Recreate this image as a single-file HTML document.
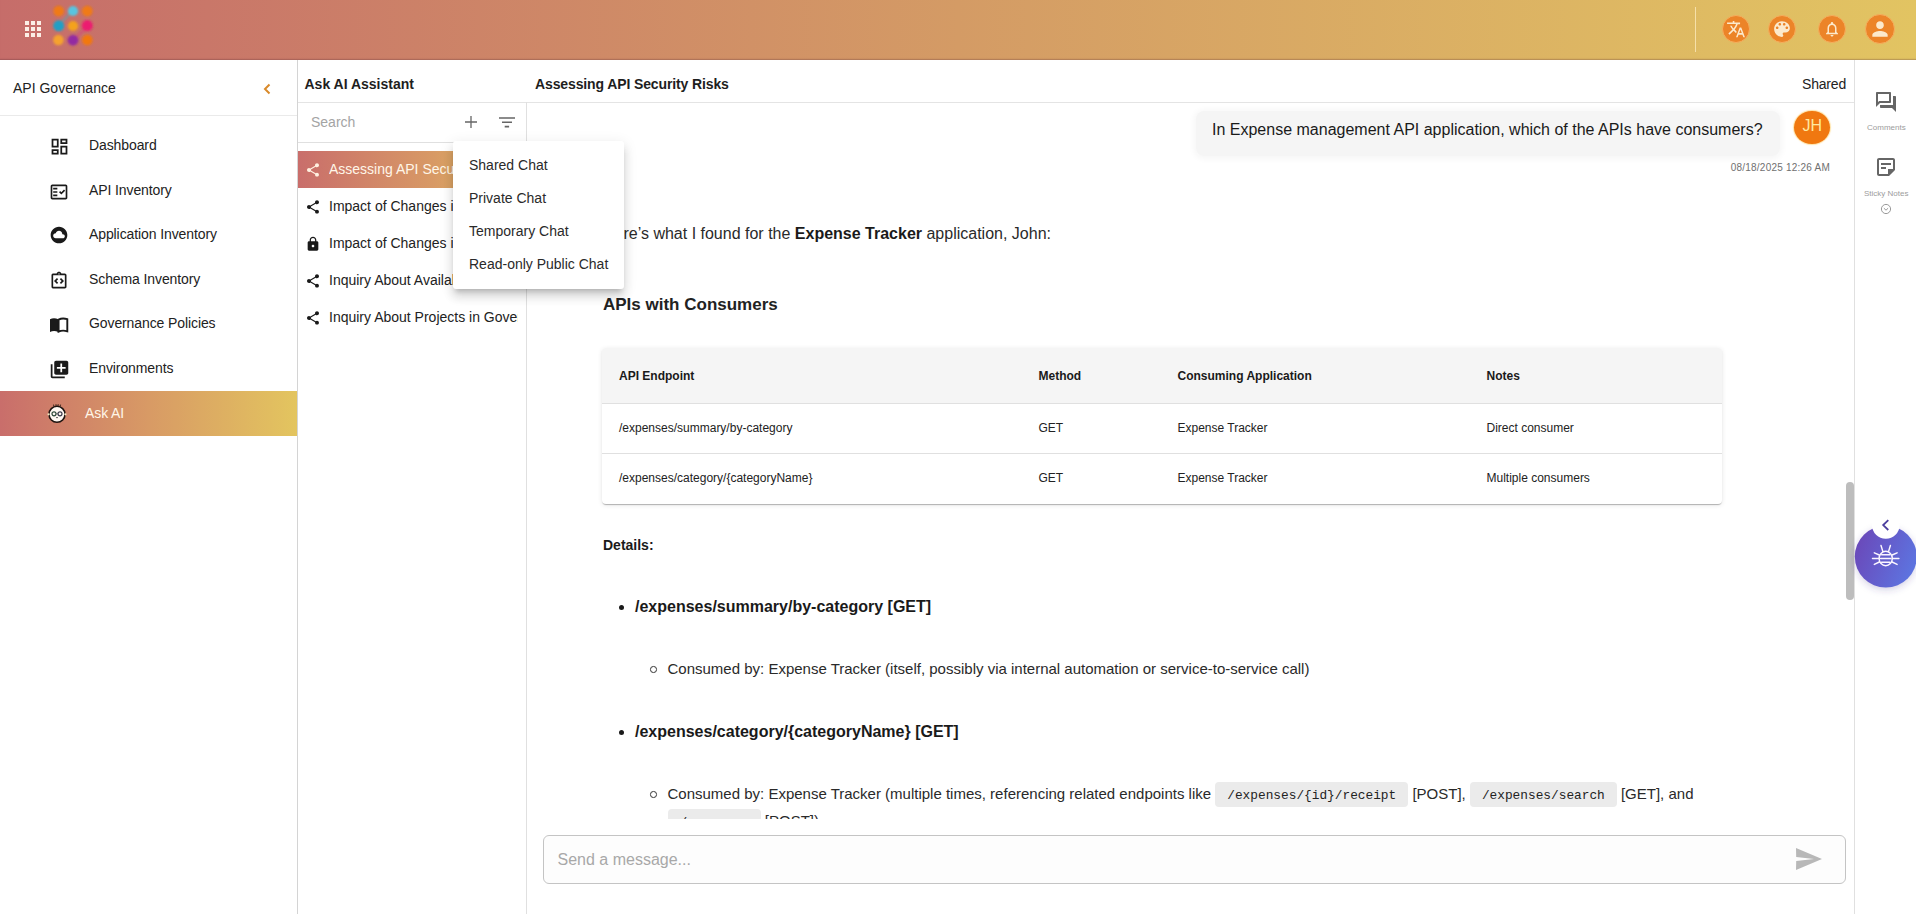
<!DOCTYPE html>
<html><head><meta charset="utf-8">
<style>
*{box-sizing:border-box;margin:0;padding:0}
html,body{width:1916px;height:914px;overflow:hidden;background:#fff;font-family:"Liberation Sans",sans-serif;color:#222}
.abs{position:absolute}
.t{position:absolute;white-space:nowrap;line-height:1;transform:translateY(-1px)}
.t0{transform:none}
#hdr{position:absolute;left:0;top:0;width:1916px;height:60px;background:linear-gradient(90deg,#C66D6A 0%,#D49B65 50%,#E2C462 100%);box-shadow:inset 0 -1px 0 rgba(80,40,50,.2),inset 0 -2px 1px rgba(80,40,50,.06)}
.hic{position:absolute;top:15px;width:28px;height:28px;border-radius:50%;background:#EC8428;border:1px solid #F6AE5E}
.hic svg{position:absolute;left:50%;top:50%;transform:translate(-50%,-50%)}
.vl{position:absolute;width:1px;background:#E0E0E0}
.hl{position:absolute;height:1px;background:#E0E0E0}
.nav{position:absolute;left:0;width:297px;height:45px}
.nav svg{position:absolute}
.nav .lb{position:absolute;left:89px;top:14px;font-size:14px;line-height:16px;color:#222;white-space:nowrap;letter-spacing:-0.1px}
.chat{position:absolute;left:298px;width:228px;height:37px;overflow:hidden}
.chat svg{position:absolute;left:7px;top:11px}
.chat .lb{position:absolute;left:31px;top:10px;width:189px;overflow:hidden;font-size:14px;line-height:16px;color:#222;white-space:nowrap}
.menu{position:absolute;left:453px;top:141px;width:171px;height:147.5px;background:#fff;border-radius:3px;box-shadow:0 5px 5px -3px rgba(0,0,0,.2),0 8px 10px 1px rgba(0,0,0,.1),0 3px 14px 2px rgba(0,0,0,.07);z-index:10}
.menu .it{position:absolute;left:16px;font-size:14px;line-height:16px;color:#2a2a2a;white-space:nowrap}
#content{position:absolute;left:527px;top:103px;width:1319px;height:715.5px;overflow:hidden}
#content .t{color:#222}
.tbl{position:absolute;left:75px;top:245px;width:1120px;height:155.5px;border-radius:4px;background:#fff;box-shadow:0 2px 1px -1px rgba(0,0,0,.18),0 1px 1px 0 rgba(0,0,0,.1),0 1px 5px 0 rgba(0,0,0,.1);overflow:hidden}
.tbl .th{position:absolute;left:0;top:0;width:100%;height:56px;background:#F5F5F5;border-bottom:1px solid #E0E0E0}
.tbl .rw{position:absolute;left:0;width:100%;border-bottom:1px solid #E0E0E0}
.tbl .c{position:absolute;font-size:12px;line-height:1;white-space:nowrap;color:#222;transform:translateY(-1px)}
.tbl .th .c{font-weight:bold;color:#1a1a1a}
code{font-family:"Liberation Mono",monospace;font-size:12.8px;background:#EBEBEB;border-radius:4px;padding:6px 12px 4px 12px;color:#222;line-height:1}
.bul{position:absolute;width:5.4px;height:5.4px;border-radius:50%;background:#1a1a1a}
.cir{position:absolute;width:6.6px;height:6.6px;border-radius:50%;border:1.1px solid #333}
</style></head>
<body>
<!-- HEADER -->
<div id="hdr">
  <svg class="abs" style="left:25px;top:21px" width="16" height="16" viewBox="0 0 16 16">
    <g fill="#FCEFE6">
      <rect x="0" y="0" width="4" height="4"/><rect x="6" y="0" width="4" height="4"/><rect x="12" y="0" width="4" height="4"/>
      <rect x="0" y="6" width="4" height="4"/><rect x="6" y="6" width="4" height="4"/><rect x="12" y="6" width="4" height="4"/>
      <rect x="0" y="12" width="4" height="4"/><rect x="6" y="12" width="4" height="4"/><rect x="12" y="12" width="4" height="4"/>
    </g>
  </svg>
  <svg class="abs" style="left:50px;top:3px" width="48" height="46" viewBox="0 0 48 46">
    <defs><filter id="lb" x="-20%" y="-20%" width="140%" height="140%"><feGaussianBlur stdDeviation="1"/></filter></defs>
    <g filter="url(#lb)">
    <path d="M11 20 L20 10.5" stroke="#3AB0C8" stroke-width="2.2" opacity=".45"/>
    <path d="M34 27 L26 34.5" stroke="#D8308A" stroke-width="2.2" opacity=".45"/>
    <circle cx="8.7" cy="8" r="5.3" fill="#F07A12"/>
    <circle cx="23" cy="8" r="5.1" fill="#58C4E0"/>
    <circle cx="37.3" cy="8" r="5.3" fill="#F07A12"/>
    <circle cx="8.7" cy="22.8" r="5.5" fill="#229FC4"/>
    <circle cx="23" cy="23" r="5.1" fill="#F4A21E"/>
    <circle cx="37.3" cy="22.6" r="5.5" fill="#EC1C70"/>
    <circle cx="8.4" cy="37" r="5.3" fill="#F5A22E"/>
    <circle cx="23" cy="37.2" r="5.4" fill="#932CA2"/>
    <circle cx="37.3" cy="37" r="5.3" fill="#F27810"/>
    </g>
  </svg>
  <div class="abs" style="left:1695px;top:7px;width:1px;height:45px;background:rgba(255,240,200,.7)"></div>
  <div class="hic" style="left:1722px"><svg width="19.5" height="19.5" viewBox="0 0 24 24"><path fill="#FCE9CC" d="M12.87 15.07l-2.54-2.51.03-.03c1.74-1.94 2.98-4.17 3.71-6.53H17V4h-7V2H8v2H1v1.99h11.17C11.5 7.92 10.44 9.75 9 11.35 8.07 10.32 7.3 9.19 6.69 8h-2c.73 1.63 1.73 3.17 2.98 4.56l-5.09 5.02L4 19l5-5 3.11 3.11.76-2.04zM18.5 10h-2L12 22h2l1.12-3h4.75L21 22h2l-4.5-12zm-2.62 7l1.62-4.33L19.12 17h-3.24z"/></svg></div>
  <div class="hic" style="left:1768px"><svg width="21" height="21" viewBox="0 0 24 24"><path fill="#FCE9CC" d="M12 3c-4.97 0-9 4.03-9 9s4.03 9 9 9c.83 0 1.5-.67 1.5-1.5 0-.39-.15-.74-.39-1.01-.23-.26-.38-.61-.38-.99 0-.83.67-1.5 1.5-1.5H16c2.76 0 5-2.24 5-5 0-4.42-4.03-8-9-8zm-5.5 9c-.83 0-1.5-.67-1.5-1.5S5.67 9 6.5 9 8 9.67 8 10.5 7.33 12 6.5 12zm3-4C8.67 8 8 7.33 8 6.5S8.67 5 9.5 5s1.5.67 1.5 1.5S10.33 8 9.5 8zm5 0c-.83 0-1.5-.67-1.5-1.5S13.67 5 14.5 5s1.5.67 1.5 1.5S15.33 8 14.5 8zm3 4c-.83 0-1.5-.67-1.5-1.5S16.67 9 17.5 9s1.5.67 1.5 1.5-.67 1.5-1.5 1.5z"/></svg></div>
  <div class="hic" style="left:1818px"><svg width="18" height="18" viewBox="0 0 24 24"><path fill="#FCE9CC" d="M12 22c1.1 0 2-.9 2-2h-4c0 1.1.89 2 2 2zm6-6v-5c0-3.07-1.64-5.64-4.5-6.32V4c0-.83-.67-1.5-1.5-1.5s-1.5.67-1.5 1.5v.68C7.63 5.36 6 7.92 6 11v5l-2 2v1h16v-1l-2-2zm-2 1H8v-6c0-2.48 1.51-4.5 4-4.5s4 2.02 4 4.5v6z"/></svg></div>
  <div class="hic" style="left:1865px;top:14px;width:30px;height:30px"><svg width="23" height="23" viewBox="0 0 24 24"><path fill="#FCE9CC" d="M12 12c2.21 0 4-1.79 4-4s-1.79-4-4-4-4 1.79-4 4 1.79 4 4 4zm0 2c-2.67 0-8 1.34-8 4v2h16v-2c0-2.66-5.33-4-8-4z"/></svg></div>
</div>

<!-- LEFT SIDEBAR -->
<div class="vl" style="left:297px;top:60px;height:854px;background:#D4D4D4"></div>
<div class="t t0" style="left:13px;top:81px;font-size:14px;color:#222">API Governance</div>
<svg class="abs" style="left:262px;top:83px" width="10" height="12" viewBox="0 0 10 12"><path d="M7.5 1.5 L3 6 L7.5 10.5" stroke="#D98A2A" stroke-width="2" fill="none"/></svg>
<div class="hl" style="left:0;top:115px;width:297px;background:#EAEAEA"></div>

<div class="nav" style="top:123px"><svg style="left:48.6px;top:13.1px" width="21" height="21" viewBox="0 0 24 24"><path fill="#1a1a1a" d="M19 5v2h-4V5h4M9 5v6H5V5h4m10 8v6h-4v-6h4M9 17v2H5v-2h4M21 3h-8v6h8V3zM11 3H3v10h8V3zm10 8h-8v10h8V11zm-10 4H3v6h8v-6z"/></svg><div class="lb">Dashboard</div></div>
<div class="nav" style="top:168px"><svg style="left:49px;top:13.5px" width="20" height="20" viewBox="0 0 24 24"><path fill="#1a1a1a" d="M20 3H4c-1.1 0-2 .9-2 2v14c0 1.1.9 2 2 2h16c1.1 0 2-.9 2-2V5c0-1.1-.9-2-2-2zm0 16H4V5h16v14z"/><path fill="#1a1a1a" d="M19.41 10.42l-1.42-1.42-3.17 3.17-1.41-1.42L12 12.16 14.82 15zM5 7h5v2H5zm0 4h5v2H5zm0 4h5v2H5z"/></svg><div class="lb">API Inventory</div></div>
<div class="nav" style="top:212px"><svg style="left:49.2px;top:13.2px" width="20" height="20" viewBox="0 0 24 24"><path fill="#1a1a1a" d="M12 2C6.48 2 2 6.48 2 12s4.48 10 10 10 10-4.48 10-10S17.52 2 12 2zm4.5 14H8c-1.66 0-3-1.34-3-3s1.34-3 3-3l.14.01C8.58 8.28 10.13 7 12 7c2.21 0 4 1.79 4 4h.5c1.38 0 2.5 1.12 2.5 2.5S17.88 16 16.5 16z"/></svg><div class="lb">Application Inventory</div></div>
<div class="nav" style="top:257px"><svg style="left:49.2px;top:13.5px" width="20" height="20" viewBox="0 0 24 24"><path fill="#1a1a1a" d="M11 14.17 8.83 12 11 9.83 9.59 8.41 6 12l3.59 3.59zm3.41 1.42L18 12l-3.59-3.59L13 9.83 15.17 12 13 14.17z"/><path fill="#1a1a1a" d="M19 3h-4.18C14.4 1.84 13.3 1 12 1s-2.4.84-2.82 2H5c-.14 0-.27.01-.4.04-.39.08-.74.28-1.01.55-.18.18-.33.4-.43.64-.1.23-.16.49-.16.77v14c0 .27.06.54.16.78s.25.45.43.64c.27.27.62.47 1.01.55.13.02.26.03.4.03h14c1.1 0 2-.9 2-2V5c0-1.1-.9-2-2-2zm-7-.25c.41 0 .75.34.75.75s-.34.75-.75.75-.75-.34-.75-.75.34-.75.75-.75zM19 19H5V5h14v14z"/></svg><div class="lb">Schema Inventory</div></div>
<div class="nav" style="top:301px"><svg style="left:49px;top:16px" width="20" height="16" viewBox="0 0 20 16"><path fill="#1a1a1a" d="M1 2.2 C3.5 0.8 6.5 0.8 9.3 2.2 L9.3 15 C6.5 13.8 3.5 13.8 1 15 Z"/><path fill="none" stroke="#1a1a1a" stroke-width="1.9" d="M9.6 2.6 C12.2 1.3 15.5 1.3 18.3 2.2 L18.3 14.3 C15.5 13.4 12.2 13.4 9.6 14.6 Z"/></svg><div class="lb">Governance Policies</div></div>
<div class="nav" style="top:346px"><svg style="left:48.6px;top:12.9px" width="21" height="21" viewBox="0 0 24 24"><path fill="#1a1a1a" d="M4 6H2v14c0 1.1.9 2 2 2h14v-2H4V6zm16-4H8c-1.1 0-2 .9-2 2v12c0 1.1.9 2 2 2h12c1.1 0 2-.9 2-2V4c0-1.1-.9-2-2-2zm-1 9h-4v4h-2v-4H9V9h4V5h2v4h4v2z"/></svg><div class="lb">Environments</div></div>
<div class="nav" style="top:391px;background:linear-gradient(90deg,#C96E6B 0%,#D89A65 50%,#E3C55F 100%)"><svg style="left:46px;top:11px" width="22" height="22" viewBox="0 0 22 22"><g stroke="#2a1a10" stroke-width="0.9"><path d="M8 4.5 7.5 2.6M10 4 10 2.2M12 4 12.2 2.2M14 4.5 14.6 2.6"/></g><circle cx="11" cy="12.3" r="8" fill="#FFF8F2" stroke="#1e1410" stroke-width="1.6"/><circle cx="8" cy="11.8" r="2" fill="none" stroke="#2f4a3a" stroke-width="1.2"/><circle cx="14" cy="11.8" r="2" fill="none" stroke="#3a3a4a" stroke-width="1.2"/><path d="M10 11.8h2" stroke="#555" stroke-width=".8"/><ellipse cx="11" cy="15.6" rx="1" ry=".6" fill="#444"/><circle cx="2.6" cy="12.3" r="1.1" fill="#F3E8C0"/><circle cx="19.4" cy="12.3" r="1.1" fill="#F3E8C0"/></svg><div class="lb" style="left:85px;color:#FFF6E8">Ask AI</div></div>

<!-- CHAT LIST -->
<div class="t" style="left:304.5px;top:78px;font-size:14px;font-weight:bold;color:#1E1E1E">Ask AI Assistant</div>
<div class="hl" style="left:298px;top:102px;width:1556px;background:#E4E4E4"></div>
<div class="t" style="left:311px;top:116px;font-size:14px;color:#A4A4A4">Search</div>
<svg class="abs" style="left:464px;top:115px" width="14" height="14" viewBox="0 0 14 14"><path d="M7 1v12M1 7h12" stroke="#666" stroke-width="1.3"/></svg>
<svg class="abs" style="left:498px;top:115px" width="18" height="14" viewBox="0 0 18 14"><path d="M1 3h16M4 7.2h10M6.7 11.6h4.4" stroke="#666" stroke-width="1.6"/></svg>
<div class="hl" style="left:298px;top:142px;width:228px;background:#E0E0E0"></div>
<div class="vl" style="left:526px;top:102px;height:812px"></div>

<div class="chat" style="top:151px;background:linear-gradient(90deg,#C96E6B 0%,#D89A65 60%,#E3C55F 100%)"><svg width="16" height="16" viewBox="0 0 24 24"><path fill="#FFF0E0" d="M18 16.08c-.76 0-1.44.3-1.96.77L8.91 12.7c.05-.23.09-.46.09-.7s-.04-.47-.09-.7l7.05-4.11c.54.5 1.25.81 2.04.81 1.66 0 3-1.34 3-3s-1.34-3-3-3-3 1.34-3 3c0 .24.04.47.09.7L8.04 9.81C7.5 9.31 6.79 9 6 9c-1.66 0-3 1.34-3 3s1.34 3 3 3c.79 0 1.5-.31 2.04-.81l7.12 4.16c-.05.21-.08.43-.08.65 0 1.61 1.31 2.92 2.92 2.92s2.92-1.31 2.92-2.92-1.31-2.92-2.92-2.92z"/></svg><div class="lb" style="color:#FFF6E8">Assessing API Security Risks</div></div>
<div class="chat" style="top:188px"><svg width="16" height="16" viewBox="0 0 24 24"><path fill="#1a1a1a" d="M18 16.08c-.76 0-1.44.3-1.96.77L8.91 12.7c.05-.23.09-.46.09-.7s-.04-.47-.09-.7l7.05-4.11c.54.5 1.25.81 2.04.81 1.66 0 3-1.34 3-3s-1.34-3-3-3-3 1.34-3 3c0 .24.04.47.09.7L8.04 9.81C7.5 9.31 6.79 9 6 9c-1.66 0-3 1.34-3 3s1.34 3 3 3c.79 0 1.5-.31 2.04-.81l7.12 4.16c-.05.21-.08.43-.08.65 0 1.61 1.31 2.92 2.92 2.92s2.92-1.31 2.92-2.92-1.31-2.92-2.92-2.92z"/></svg><div class="lb">Impact of Changes in API</div></div>
<div class="chat" style="top:225px"><svg width="16" height="16" viewBox="0 0 24 24"><path fill="#1a1a1a" d="M18 8h-1V6c0-2.76-2.24-5-5-5S7 3.24 7 6v2H6c-1.1 0-2 .9-2 2v10c0 1.1.9 2 2 2h12c1.1 0 2-.9 2-2V10c0-1.1-.9-2-2-2zm-6 9c-1.1 0-2-.9-2-2s.9-2 2-2 2 .9 2 2-.9 2-2 2zm3.1-9H8.9V6c0-1.71 1.39-3.1 3.1-3.1 1.71 0 3.1 1.39 3.1 3.1v2z"/></svg><div class="lb">Impact of Changes in API</div></div>
<div class="chat" style="top:262px"><svg width="16" height="16" viewBox="0 0 24 24"><path fill="#1a1a1a" d="M18 16.08c-.76 0-1.44.3-1.96.77L8.91 12.7c.05-.23.09-.46.09-.7s-.04-.47-.09-.7l7.05-4.11c.54.5 1.25.81 2.04.81 1.66 0 3-1.34 3-3s-1.34-3-3-3-3 1.34-3 3c0 .24.04.47.09.7L8.04 9.81C7.5 9.31 6.79 9 6 9c-1.66 0-3 1.34-3 3s1.34 3 3 3c.79 0 1.5-.31 2.04-.81l7.12 4.16c-.05.21-.08.43-.08.65 0 1.61 1.31 2.92 2.92 2.92s2.92-1.31 2.92-2.92-1.31-2.92-2.92-2.92z"/></svg><div class="lb">Inquiry About Available APIs</div></div>
<div class="chat" style="top:299px"><svg width="16" height="16" viewBox="0 0 24 24"><path fill="#1a1a1a" d="M18 16.08c-.76 0-1.44.3-1.96.77L8.91 12.7c.05-.23.09-.46.09-.7s-.04-.47-.09-.7l7.05-4.11c.54.5 1.25.81 2.04.81 1.66 0 3-1.34 3-3s-1.34-3-3-3-3 1.34-3 3c0 .24.04.47.09.7L8.04 9.81C7.5 9.31 6.79 9 6 9c-1.66 0-3 1.34-3 3s1.34 3 3 3c.79 0 1.5-.31 2.04-.81l7.12 4.16c-.05.21-.08.43-.08.65 0 1.61 1.31 2.92 2.92 2.92s2.92-1.31 2.92-2.92-1.31-2.92-2.92-2.92z"/></svg><div class="lb">Inquiry About Projects in Governance</div></div>

<!-- MAIN HEADER -->
<div class="t" style="left:535px;top:78px;font-size:14px;font-weight:bold;color:#1E1E1E;letter-spacing:-0.12px">Assessing API Security Risks</div>
<div class="t" style="right:70px;top:78px;font-size:14px;color:#222;letter-spacing:-0.2px">Shared</div>
<div class="vl" style="left:1854px;top:60px;height:854px"></div>

<!-- CONTENT -->
<div id="content">
  <!-- user bubble -->
  <div class="abs" style="left:669px;top:8px;width:584px;height:45px;border-radius:8px;background:#F5F5F5;box-shadow:0 1px 6px 2px rgba(0,0,0,.04);filter:blur(0.6px)"></div>
  <div class="t" style="left:685px;top:19.5px;font-size:16px;color:#1a1a1a">In Expense management API application, which of the APIs have consumers?</div>
  <div class="abs" style="left:1267px;top:7.5px;width:36px;height:33.5px;border-radius:50%;background:#F07810;box-shadow:0 0 1px 1px rgba(255,200,80,.5)"></div>
  <div class="t t0" style="left:1275.5px;top:15px;font-size:16px;color:#FFE9A0">JH</div>
  <div class="t t0" style="right:16px;top:59.5px;font-size:10px;letter-spacing:0.22px;color:#707070">08/18/2025 12:26 AM</div>

  <!-- AI response -->
  <div class="t t0" style="left:76px;top:122.5px;font-size:16px;color:#2a2a2a">Here’s what I found for the <b style="color:#1a1a1a">Expense Tracker</b> application, John:</div>
  <div class="t t0" style="left:76px;top:193px;font-size:17px;font-weight:bold;color:#222">APIs with Consumers</div>

  <div class="tbl">
    <div class="th">
      <div class="c" style="left:17px;top:23px">API Endpoint</div>
      <div class="c" style="left:436.5px;top:23px">Method</div>
      <div class="c" style="left:575.5px;top:23px">Consuming Application</div>
      <div class="c" style="left:884.5px;top:23px">Notes</div>
    </div>
    <div class="rw" style="top:56px;height:50px">
      <div class="c" style="left:17px;top:18.5px">/expenses/summary/by-category</div>
      <div class="c" style="left:436.5px;top:18.5px">GET</div>
      <div class="c" style="left:575.5px;top:18.5px">Expense Tracker</div>
      <div class="c" style="left:884.5px;top:18.5px">Direct consumer</div>
    </div>
    <div class="rw" style="top:106px;height:50px;border-bottom:none">
      <div class="c" style="left:17px;top:19px">/expenses/category/{categoryName}</div>
      <div class="c" style="left:436.5px;top:19px">GET</div>
      <div class="c" style="left:575.5px;top:19px">Expense Tracker</div>
      <div class="c" style="left:884.5px;top:19px">Multiple consumers</div>
    </div>
  </div>

  <div class="t" style="left:76px;top:435.5px;font-size:14px;font-weight:bold;color:#1a1a1a">Details:</div>

  <div class="bul" style="left:91.7px;top:501.7px"></div>
  <div class="t" style="left:108px;top:496.5px;font-size:16px;font-weight:bold;color:#1a1a1a">/expenses/summary/by-category [GET]</div>
  <div class="cir" style="left:123px;top:563px"></div>
  <div class="t" style="left:140.5px;top:558.8px;font-size:15px;color:#2a2a2a">Consumed by: Expense Tracker (itself, possibly via internal automation or service-to-service call)</div>

  <div class="bul" style="left:91.7px;top:626.7px"></div>
  <div class="t t0" style="left:108px;top:621px;font-size:16px;font-weight:bold;color:#1a1a1a">/expenses/category/{categoryName} [GET]</div>
  <div class="cir" style="left:123px;top:688px"></div>
  <div class="abs" style="left:140.5px;top:678px;width:1100px;font-size:15px;line-height:26.6px;color:#2a2a2a;white-space:normal">Consumed by: Expense Tracker (multiple times, referencing related endpoints like <code>/expenses/{id}/receipt</code> [POST], <code>/expenses/search</code> [GET], and <code>/expenses</code> [POST])</div>
</div>

<!-- INPUT -->
<div class="abs" style="left:543px;top:835px;width:1303px;height:49px;border:1px solid #C4C4C4;border-radius:6px;background:#FDFDFD"></div>
<div class="t t0" style="left:557.5px;top:851.5px;font-size:16px;color:#A8A8A8">Send a message...</div>
<svg class="abs" style="left:1793px;top:846px" width="30" height="26" viewBox="0 0 30 26"><path fill="#B8B8B8" d="M3 2 L29 13 L3 24 L3.2 15 L21 13 L3.2 11 Z"/></svg>

<!-- SCROLLBAR -->
<div class="abs" style="left:1846px;top:482px;width:8px;height:118px;border-radius:4px;background:#BDBDBD"></div>

<!-- RIGHT RAIL -->
<svg class="abs" style="left:1874px;top:89.5px" width="24" height="24" viewBox="0 0 24 24"><path fill="#666" d="M15 4v7H5.17l-.59.59-.58.58V4h11m1-2H3c-.55 0-1 .45-1 1v14l4-4h10c.55 0 1-.45 1-1V3c0-.55-.45-1-1-1zm5 4h-2v9H6v2c0 .55.45 1 1 1h11l4 4V7c0-.55-.45-1-1-1z"/></svg>
<div class="t t0" style="left:1867px;top:124px;font-size:8px;color:#9C9C9C">Comments</div>
<svg class="abs" style="left:1874px;top:155px" width="24" height="24" viewBox="0 0 24 24"><path fill="#666" d="M19 5v9h-5v5H5V5h14m0-2H5c-1.1 0-2 .9-2 2v14c0 1.1.9 2 2 2h10l6-6V5c0-1.1-.9-2-2-2zm-7 11H7v-2h5v2zm5-4H7V8h10v2z"/></svg>
<div class="t t0" style="left:1864px;top:190.2px;font-size:8px;color:#9C9C9C">Sticky Notes</div>
<svg class="abs" style="left:1880px;top:203px" width="12" height="12" viewBox="0 0 12 12"><circle cx="6" cy="6" r="4.6" fill="none" stroke="#9A9A9A" stroke-width="1"/><path d="M3.9 5.2 6 7.2 8.1 5.2" fill="none" stroke="#9A9A9A" stroke-width="1"/></svg>

<!-- BUG FAB -->
<svg class="abs" style="left:1845px;top:495px" width="71" height="105" viewBox="0 -10 71 105">
  <defs>
    <linearGradient id="bg1" x1="0" y1="0.2" x2="1" y2="0.6"><stop offset="0" stop-color="#6B47B8"/><stop offset="1" stop-color="#5D74E0"/></linearGradient>
    <filter id="sh" x="-50%" y="-50%" width="200%" height="200%"><feGaussianBlur stdDeviation="3.5"/></filter>
    <filter id="sh2" x="-50%" y="-50%" width="200%" height="200%"><feGaussianBlur stdDeviation="2"/></filter>
  </defs>
  <circle cx="40.8" cy="54" r="31" fill="rgba(70,60,140,.22)" filter="url(#sh)"/>
  <circle cx="40.8" cy="51.6" r="31" fill="url(#bg1)"/>
  
  <circle cx="40.8" cy="20" r="13.8" fill="#fff"/>
  <path d="M43.3 15.2 38.2 20.1 43.3 25" fill="none" stroke="#4B3E9E" stroke-width="1.8"/>
  <g fill="none" stroke="#FBF6FF" stroke-width="1.45" stroke-linecap="round">
    <ellipse cx="40.7" cy="53.5" rx="6.6" ry="7.2"/>
    <path d="M36.6 49.7h8.2M35.6 53.5h10.2M36.6 57.2h8.2"/>
    <path d="M37.9 46.6 36 40.5M43.5 46.6 45.4 40.5"/>
    <path d="M34.3 50 29.3 47.8M34 53.5h-6.5M34.3 57 29.3 59.4M47.1 50 52.1 47.8M47.4 53.5h6.5M47.1 57 52.1 59.4"/>
  </g>
</svg>

<!-- DROPDOWN -->
<div class="menu">
  <div class="it" style="top:16px">Shared Chat</div>
  <div class="it" style="top:49px">Private Chat</div>
  <div class="it" style="top:82px">Temporary Chat</div>
  <div class="it" style="top:115px">Read-only Public Chat</div>
</div>
</body></html>
